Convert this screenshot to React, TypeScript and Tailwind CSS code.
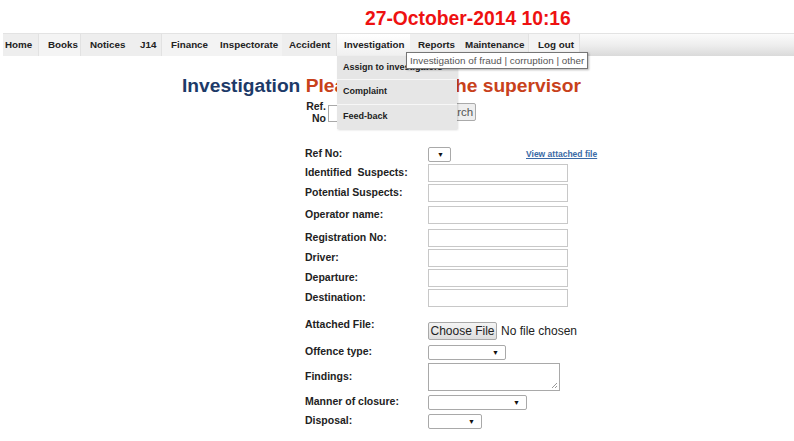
import React from "react";

const navItems: { label: string; w: number; pl: number; cls: string }[] = [
  { label: "Home", w: 35, pl: 2, cls: "bg-[#eeeeee]" },
  { label: "Books", w: 43, pl: 9, cls: "bg-[#f4f4f4] border-x border-[#e2e2e2]" },
  { label: "Notices", w: 48, pl: 9, cls: "bg-[#eeeeee]" },
  { label: "J14", w: 33, pl: 11, cls: "bg-[#eeeeee] border-r border-[#e2e2e2]" },
  { label: "Finance", w: 50, pl: 9, cls: "bg-[#f3f3f3]" },
  { label: "Inspectorate", w: 70, pl: 8, cls: "bg-[#f3f3f3]" },
  { label: "Accident", w: 54, pl: 7, cls: "bg-[#eeeeee]" },
  { label: "Investigation", w: 74, pl: 7, cls: "bg-gradient-to-b from-[#ffffff] to-[#f0f0f0] border-l border-[#e4e4e4]" },
  { label: "Reports", w: 50, pl: 8, cls: "bg-[#f0f0f0]" },
  { label: "Maintenance", w: 68, pl: 5, cls: "bg-[#eeeeee]" },
  { label: "Log out", w: 52, pl: 9, cls: "bg-[#f4f4f4] border-x border-[#e2e2e2]" },
];

function FakeSelect({ w, arrowRight = 6 }: { w: number; arrowRight?: number }) {
  return (
    <div
      className="relative h-[15px] border border-[#a9a9a9] rounded-[2px] bg-white"
      style={{ width: w }}
    >
      <span
        className="absolute top-[1px] text-[7px] leading-[12px] text-[#111]"
        style={{ right: arrowRight }}
      >
        ▼
      </span>
    </div>
  );
}

function TextInput() {
  return <div className="w-[140px] h-[18px] border border-[#c8c8c8] bg-white" />;
}

function Row({ h, label, children }: { h: number; label: string; children?: React.ReactNode }) {
  return (
    <div className="flex items-center" style={{ height: h }}>
      <div className="w-[123px] text-[10.5px] font-bold text-[#222] whitespace-pre">{label}</div>
      {children}
    </div>
  );
}

export default function App() {
  return (
    <div className="relative w-[794px] h-[441px] bg-white overflow-hidden font-['Liberation_Sans',Arial,sans-serif]">
      {/* Date title */}
      <div className="h-[33px] pl-[365px] pt-[8px] text-[19.3px] leading-[22px] font-bold text-[#ee1111]">
        27-October-2014 10:16
      </div>

      {/* Nav bar */}
      <div className="h-[23px] flex bg-gradient-to-b from-[#fbfbfb] via-[#eeeeee] to-[#dadada] border-t border-[#e3e3e3] ml-[3px]">
        {navItems.map((n) => (
          <div
            key={n.label}
            className={`h-full flex items-center text-[9.8px] font-bold text-[#222] ${n.cls}`}
            style={{ width: n.w, paddingLeft: n.pl }}
          >
            {n.label}
          </div>
        ))}
      </div>

      {/* Heading */}
      <div className="pl-[182px] mt-[19px] text-[19.2px] leading-[22px] font-bold whitespace-nowrap">
        <span className="text-[#1d3a68]">Investigation</span>{" "}
        <span className="text-[#c8411b]">Please allocate the supervisor</span>
      </div>

      {/* Search row */}
      <div className="ml-[305px] mt-[2px] flex items-center h-[26px]">
        <div className="w-[21px] text-right text-[10.5px] leading-[12px] font-bold text-[#222]">
          Ref.
          <br />
          No
        </div>
        <div className="ml-[2px] mt-[2px] w-[102px] h-[17px] border border-[#a9a9a9] bg-white" />
        <div className="ml-[4px] h-[18px] w-[42px] border border-[#aaaaaa] rounded-[2px] bg-[#eeeeee] text-[11.5px] leading-[16px] text-[#555] text-center">
          Search
        </div>
      </div>

      {/* Form */}
      <div className="ml-[305px] mt-[20px]">
        <div className="flex items-center h-[18px]">
          <div className="w-[123px] text-[10.5px] font-bold text-[#222]">Ref No:</div>
          <FakeSelect w={23} />
          <a className="ml-[75px] text-[8.5px] font-bold text-[#3a6aa6] underline">View attached file</a>
        </div>
        <Row h={20} label={"Identified  Suspects:"}>
          <TextInput />
        </Row>
        <Row h={20} label="Potential Suspects:">
          <TextInput />
        </Row>
        <Row h={24} label="Operator name:">
          <TextInput />
        </Row>
        <Row h={22} label="Registration No:">
          <TextInput />
        </Row>
        <Row h={18} label="Driver:">
          <TextInput />
        </Row>
        <Row h={22} label="Departure:">
          <TextInput />
        </Row>
        <Row h={18} label="Destination:">
          <TextInput />
        </Row>

        <div className="flex h-[36px] pt-[8px]">
          <div className="w-[123px] text-[10.5px] font-bold text-[#222] mt-[2px]">Attached File:</div>
          <div className="flex items-center mt-[7px] h-[18px]">
            <div className="h-[18px] w-[69px] border border-[#a9a9a9] rounded-[2px] bg-gradient-to-b from-[#f4f4f4] to-[#dedede] text-[12px] leading-[16px] text-[#222] text-center">
              Choose File
            </div>
            <span className="ml-[4px] text-[12px] text-[#222]">No file chosen</span>
          </div>
        </div>

        <Row h={18} label="Offence type:">
          <FakeSelect w={78} />
        </Row>
        <Row h={32} label="Findings:">
          <div className="relative w-[132px] h-[28px] border border-[#a9a9a9] bg-white">
            <svg className="absolute right-[1px] bottom-[1px]" width="7" height="7" viewBox="0 0 7 7">
              <line x1="6" y1="1" x2="1" y2="6" stroke="#999" strokeWidth="1" />
              <line x1="6" y1="4" x2="4" y2="6" stroke="#999" strokeWidth="1" />
            </svg>
          </div>
        </Row>
        <Row h={18} label="Manner of closure:">
          <FakeSelect w={99} />
        </Row>
        <Row h={20} label="Disposal:">
          <FakeSelect w={54} />
        </Row>
      </div>

      {/* Dropdown menu (overlay) */}
      <div className="absolute left-[337px] top-[56px] w-[120px] bg-[#e6e6e6] shadow-[1px_1px_2px_rgba(0,0,0,0.15)]">
        <div className="h-[24px] flex items-center pl-[6px] text-[9px] font-bold text-[#222] border-b border-[#f7f7f7]">
          Assign to investigators
        </div>
        <div className="h-[25px] flex items-center pl-[6px] text-[9px] font-bold text-[#222] border-b border-[#f7f7f7]">
          Complaint
        </div>
        <div className="h-[24px] flex items-center pl-[6px] text-[9px] font-bold text-[#222]">
          Feed-back
        </div>
      </div>

      {/* Tooltip (overlay) */}
      <div className="absolute left-[406px] top-[52px] h-[17px] px-[3px] bg-white border border-[#767676] shadow-[1px_1px_2px_rgba(0,0,0,0.3)] text-[9.9px] leading-[15px] text-[#555] whitespace-nowrap">
        Investigation of fraud | corruption | other
      </div>
    </div>
  );
}
